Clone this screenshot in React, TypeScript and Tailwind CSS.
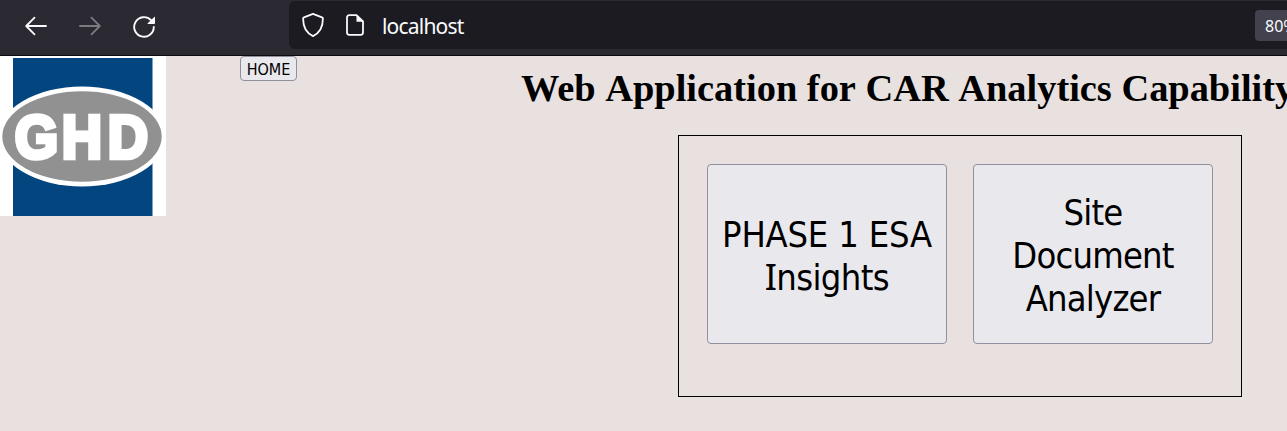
import React from "react";

function Toolbar() {
  return (
    <header className="flex h-14 w-full shrink-0 border-b border-[#0c0b10] bg-[#2b2a33]">
      <nav className="flex w-[289px] shrink-0 pt-[14px] pl-6 text-[#fbfbfe]">
        <button aria-label="Back" className="mr-[30px] h-6 w-6">
          <svg width="24" height="24" viewBox="0 0 24 24" fill="none" stroke="currentColor" strokeWidth="1.8" strokeLinecap="round" strokeLinejoin="round">
            <path d="M22 12H2.4M10.5 3.7L2.2 12l8.3 8.3" />
          </svg>
        </button>
        <button aria-label="Forward" className="mr-[30px] h-6 w-6 text-[#7c7b81]">
          <svg width="24" height="24" viewBox="0 0 24 24" fill="none" stroke="currentColor" strokeWidth="1.8" strokeLinecap="round" strokeLinejoin="round">
            <path d="M2 12h19.6M13.5 3.7l8.3 8.3-8.3 8.3" />
          </svg>
        </button>
        <button aria-label="Reload" className="h-6 w-6">
          <svg width="24" height="24" viewBox="0 0 24 24" fill="none" stroke="currentColor" strokeWidth="1.9" strokeLinecap="round">
            <path d="M21.8 13A9.8 9.8 0 1 1 19 6.1" />
            <path d="M22.6 2.800q.4-.2.400.3v6q0 .9-.9.900H16q-.8-.2-.3-.7z" fill="currentColor" stroke="none" />
          </svg>
        </button>
      </nav>
      <div className="mt-px flex h-12 flex-1 items-center overflow-hidden rounded-l-md bg-[#1c1b22] pl-[13px] text-[#fbfbfe]">
        <svg className="mr-[21px] shrink-0" width="22" height="26" viewBox="0 0 22 26" fill="none" stroke="currentColor" strokeWidth="1.8" strokeLinejoin="round">
          <path d="M11 1.9l9 3.5c.5.2.9.6.9 1.2 0 7.6-2.7 14.3-9.9 17.5C3.8 20.9 1.1 14.2 1.1 6.600c0-.6.4-1 .9-1.200z" />
        </svg>
        <svg className="mr-[17px] shrink-0" width="20" height="24" viewBox="0 0 20 24" fill="none" stroke="currentColor" strokeWidth="1.8" strokeLinejoin="round">
          <path d="M11.500 2.200H4.200a2.200 2.200 0 0 0-2.200 2.200v15.200a2.200 2.200 0 0 0 2.200 2.200h11.600a2.200 2.200 0 0 0 2.200-2.200V8.500z" />
          <path d="M11.500 1.600V8.800H18.800z" fill="currentColor" stroke="none" />
        </svg>
        <span className="pt-[2px] font-['Noto_Sans',sans-serif] text-[21px] leading-6 tracking-[-0.8px]">localhost</span>
        <div className="ml-auto h-[31px] w-8 shrink-0 rounded-l bg-[#42414d] pl-[10px] font-['Noto_Sans',sans-serif] text-base leading-8 whitespace-nowrap">
          80%
        </div>
      </div>
    </header>
  );
}

function Logo() {
  return (
    <svg className="shrink-0" width="166" height="160" viewBox="0 0 166 160" role="img" aria-label="GHD">
      <rect width="166" height="160" fill="#fff" />
      <rect x="13" y="2" width="139.500" height="158" fill="#02457f" />
      <ellipse cx="82" cy="80.500" rx="84" ry="50" fill="#fff" />
      <ellipse cx="82" cy="80.500" rx="79.700" ry="45.300" fill="#919191" />
      <text
        x="16.300 68.500 119.600"
        y="102"
        transform="scale(0.9 1)"
        fill="#fff"
        stroke="#fff"
        strokeWidth="4.500"
        fontFamily="Liberation Sans, sans-serif"
        fontWeight="700"
        fontSize="62"
      >
        GHD
      </text>
    </svg>
  );
}

function Card({ children }: { children: React.ReactNode }) {
  return (
    <button className="h-[180px] w-[240px] rounded-[4px] border border-[#8f8f9d] bg-[#e9e9ed] pt-[3px] font-['DejaVu_Sans_Condensed','DejaVu_Sans',sans-serif] text-[36px] leading-[43px] tracking-[-0.8px] text-black">
      {children}
    </button>
  );
}

export default function App() {
  return (
    <div className="flex h-[431px] w-full flex-col overflow-hidden bg-[#e9e1df]">
      <Toolbar />
      <main className="flex items-start">
        <Logo />
        <button className="ml-[74px] h-[25px] w-[57px] shrink-0 rounded-[4px] border border-[#8f8f9d] bg-[#e9e9ed] pt-px font-['DejaVu_Sans_Condensed','DejaVu_Sans',sans-serif] text-[16px] leading-[23px] text-black">
          HOME
        </button>
        <section className="ml-[224px] flex w-[878px] shrink-0 flex-col items-center">
          <h1 className="h-[79px] w-full pt-[10px] font-['Liberation_Serif',serif] text-[38.400px] leading-[44px] font-bold whitespace-nowrap text-black [font-kerning:none]">
            <span className="[font-kerning:normal]">Web</span> Application for CAR Analytics Capability
          </h1>
          <div className="flex h-[262px] w-[564px] gap-[26px] border border-black pt-7 pl-7">
            <Card>
              <span className="tracking-[-0.2px]">PHASE 1 ESA</span>
              <br />
              <span className="font-['Noto_Sans',sans-serif] leading-none">I</span>
              <span className="tracking-[-0.6px]">nsights</span>
            </Card>
            <Card>
              Site
              <br />
              Document
              <br />
              Analyzer
            </Card>
          </div>
        </section>
      </main>
    </div>
  );
}
